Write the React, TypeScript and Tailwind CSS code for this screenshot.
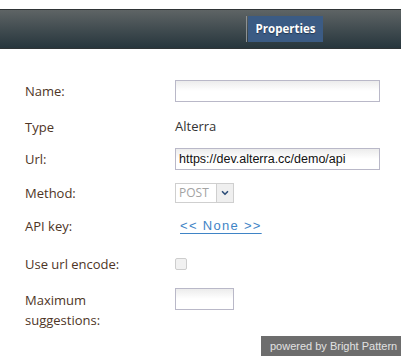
import { ChevronDown } from 'lucide-react';

const labelCls = 'w-[150px] shrink-0 text-[13px] leading-5 text-[#4e3526]';
const inputCls =
  'h-[22px] border border-[#b9b8c8] bg-gradient-to-b from-[#ececec] via-white to-white px-[3px] text-[12.5px] text-[#111] outline-none';

export default function App() {
  return (
    <div className="flex h-[356px] w-[401px] flex-col bg-white" style={{ fontFamily: '"Open Sans", "Liberation Sans", sans-serif' }}>
      {/* top bar */}
      <div className="mt-[9px] flex h-[40px] items-center border-y border-[#2f3436] bg-gradient-to-b from-[#5e6465] to-[#27363d]">
        <div className="w-[246px] shrink-0" />
        <div className="h-[26px] w-px bg-[#8d9193]" />
        <div className="ml-[1px] flex h-[26px] w-[75px] items-center justify-center bg-[#3b5b84] text-[11.5px] font-bold text-white [text-shadow:0_1px_1px_rgba(0,0,0,0.4)]">
          Properties
        </div>
      </div>

      {/* form */}
      <div className="flex flex-col pl-[25px]">
        <div className="mt-[31px] flex h-[22px] items-center">
          <span className={labelCls}>Name:</span>
          <input className={`${inputCls} w-[205px]`} defaultValue="" />
        </div>

        <div className="mt-[14px] flex h-[22px] items-center">
          <span className={labelCls}>Type</span>
          <span className="text-[13px] text-[#333]">Alterra</span>
        </div>

        <div className="mt-[10px] flex h-[21px] items-center">
          <span className={labelCls}>Url:</span>
          <input
            className={`${inputCls} h-[21px] w-[205px]`}
            style={{ fontFamily: '"Liberation Sans", Arial, sans-serif' }}
            defaultValue="https://dev.alterra.cc/demo/api"
          />
        </div>

        <div className="mt-[14px] flex h-[20px] items-center">
          <span className={labelCls}>Method:</span>
          <div className="flex h-[20px] w-[59px] border border-[#cfcfcf]">
            <span className="flex-1 pl-[3px] text-[12px] leading-[18px] text-[#a3a3a3]">POST</span>
            <span className="flex w-[17px] items-center justify-center border-l border-[#cfcfcf] bg-[#efefef]">
              <ChevronDown size={10} strokeWidth={4} className="text-[#2f4f7a]" />
            </span>
          </div>
        </div>

        <div className="mt-[13px] flex h-[20px] items-center">
          <span className={labelCls}>API key:</span>
          <a
            href="#"
            className="ml-[5px] text-[13px] tracking-[1.3px] text-[#3f84c6] underline underline-offset-[3px]"
            style={{ fontFamily: '"Liberation Sans", Arial, sans-serif' }}
          >
            &lt;&lt;&nbsp;None&nbsp;&gt;&gt;
          </a>
        </div>

        <div className="mt-[18px] flex h-[20px] items-center">
          <span className={labelCls}>Use url encode:</span>
          <span className="h-[12px] w-[12px] rounded-[2px] border border-[#cdcdcd] bg-[#f1f1f1]" />
        </div>

        <div className="mt-[14px] flex items-start">
          <span className={`${labelCls} mt-[2px]`}>
            Maximum
            <br />
            suggestions:
          </span>
          <input className={`${inputCls} h-[21px] w-[59px]`} defaultValue="" />
        </div>
      </div>

      <div
        className="mt-auto flex h-[20px] w-[140px] items-center self-end whitespace-nowrap bg-[#6d6d6d] pl-[9px] text-[11px] text-[#e2e2e2]"
        style={{ fontFamily: '"Liberation Sans", Arial, sans-serif' }}
      >
        powered by Bright Pattern
      </div>
    </div>
  );
}
